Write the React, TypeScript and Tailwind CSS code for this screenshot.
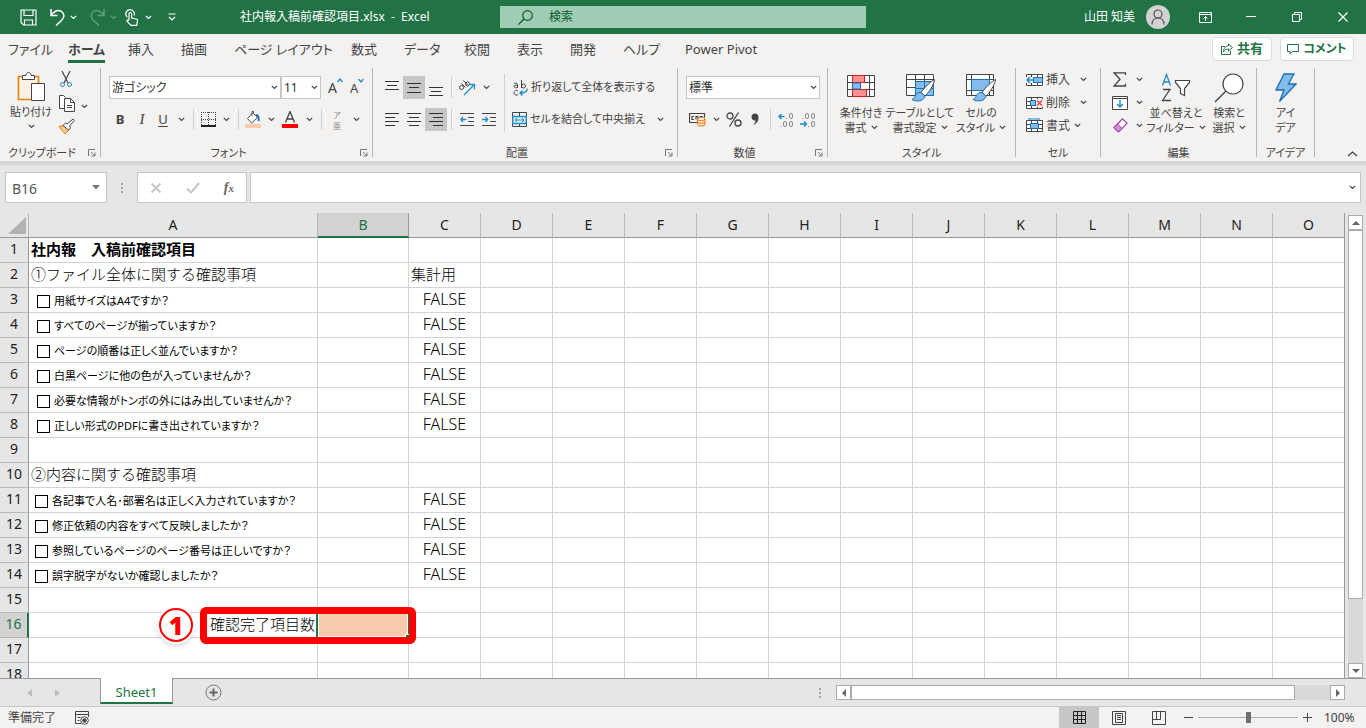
import React, { useState } from "react";

const ink = "#444444";
const blue = "#1e8bcd";

type Kids = { children?: React.ReactNode };

function Svg({ w = 16, h = 16, label, children }: Kids & { w?: number; h?: number; label?: string }) {
  return (
    <svg width={w} height={h} viewBox={`0 0 ${w} ${h}`} fill="none" stroke={ink} aria-label={label} className="shrink-0">
      {children}
    </svg>
  );
}

function Chevron({ color = ink }: { color?: string }) {
  return (
    <svg width="7" height="5" viewBox="0 0 7 5" fill="none" stroke={color} strokeWidth="1.2" className="shrink-0">
      <path d="M.8.8 3.5 3.5 6.2.8" />
    </svg>
  );
}

function Drop({ label }: { label: string }) {
  return (
    <button aria-label={label} className="flex h-[23px] w-4 shrink-0 items-center justify-center">
      <Chevron />
    </button>
  );
}

function Tool({ label, active, wide, children }: Kids & { label: string; active?: boolean; wide?: boolean }) {
  return (
    <button
      aria-label={label}
      className={`flex h-[23px] shrink-0 items-center justify-center ${wide ? "w-[22px]" : "w-5"} ${active ? "bg-[#c8c6c4]" : ""}`}
    >
      {children}
    </button>
  );
}

function Rule() {
  return <div className="mx-1 h-[21px] w-px shrink-0 bg-[#d0cecc]" />;
}

function Group({ name, width, launcher, children }: Kids & { name: string; width: string; launcher?: boolean }) {
  return (
    <>
      <section aria-label={name} className={`flex shrink-0 flex-col ${width}`}>
        <div className="flex h-[77px]">{children}</div>
        <div className="flex h-4 items-center">
          <span className="flex-1 text-center leading-4 whitespace-nowrap">{name}</span>
          {launcher && (
            <button aria-label={`${name}の設定`} className="flex w-4 justify-end pr-1">
              <Svg w={8} h={8}>
                <path d="M.5 7V.5H7M3 3l3.500 3.500M7 3.500V7H3.500" stroke="#777" />
              </Svg>
            </button>
          )}
        </div>
      </section>
      <div className="h-[89px] w-px shrink-0 bg-[#b8b6b4]" />
    </>
  );
}

function BigButton({ icon, lines, drop, width }: { icon: React.ReactNode; lines: [string, string]; drop?: boolean; width: string }) {
  return (
    <button className={`flex shrink-0 flex-col items-center pt-[5px] leading-[15px] whitespace-nowrap ${width}`}>
      <span className="mb-[2px] flex h-[30px] items-center">{icon}</span>
      <span>{lines[0]}</span>
      <span className="flex items-center gap-1">
        {lines[1]}
        {drop && <Chevron />}
      </span>
    </button>
  );
}

function Lines({ rows, w = 14 }: { rows: [number, number, number][]; w?: number }) {
  return (
    <Svg w={w} h={16}>
      {rows.map(([x1, x2, y]) => (
        <path key={y} d={`M${x1} ${y}.5H${x2}`} stroke="#333" />
      ))}
    </Svg>
  );
}

function Brush() {
  return (
    <>
      <path d="M31.500 6.500C28 8 21 15 18 19.500l4 3.500C26 19 31 12 31.500 6.500Z" fill="#fff" stroke="#444" />
      <path d="M18 19.500c-3-.5-5 1-6 4-.6 1.800-1.500 2.500-3 3 4 2.500 12 2 13-3.500Z" fill="#83bbec" stroke="#1a6fb5" />
    </>
  );
}

function TitleBar() {
  return (
    <header className="flex h-[34px] shrink-0 items-center bg-[#217346] text-white">
      <div className="flex w-[500px] shrink-0 items-center pl-5">
        <div className="flex w-[220px] items-center">
          <button aria-label="保存">
            <svg width="17" height="17" viewBox="0 0 17 17" fill="none" stroke="#fff" strokeWidth="1.200">
              <path d="M1 1h15v15H3.500L1 13.500ZM4 1v5.500h9V1M4.500 16v-5h8v5" />
            </svg>
          </button>
          <button aria-label="元に戻す" className="ml-3 flex items-center gap-1">
            <svg width="17" height="18" viewBox="0 0 17 18" fill="none" stroke="#fff" strokeWidth="1.500">
              <path d="M2 1v6.500h6.500M2 7.500C5 3.500 9 1.500 12.500 3.500c3.500 2.500 3 6 0 9L7 17.500" />
            </svg>
            <Chevron color="#fff" />
          </button>
          <button aria-label="やり直し" className="ml-3 flex items-center gap-1 opacity-30">
            <svg width="17" height="18" viewBox="0 0 17 18" fill="none" stroke="#fff" strokeWidth="1.500">
              <path d="M15 1v6.500H8.500M15 7.500C12 3.500 8 1.500 4.500 3.500 1 6 1.500 9.500 4.500 12.500l5.500 5" />
            </svg>
            <Chevron color="#fff" />
          </button>
          <button aria-label="タッチ/マウス モードの切り替え" className="ml-2 flex items-center gap-[6px]">
            <svg width="14" height="17" viewBox="0 0 14 17" fill="none" stroke="#fff" strokeWidth="1.200">
              <path d="M2.200 8A4.200 4.200 0 1 1 9 6.500M4 11V4.800a1.300 1.300 0 0 1 2.600 0V9l4.500 1c1 .2 1.600 1 1.400 2l-.8 4.300H6L2 12.200c-.4-1 .8-1.800 2-.7" />
            </svg>
            <Chevron color="#fff" />
          </button>
          <button aria-label="クイック アクセス ツール バーのユーザー設定" className="ml-4">
            <svg width="8" height="8" viewBox="0 0 8 8" fill="none" stroke="#fff" strokeWidth="1.200">
              <path d="M.5 1h7M1 4l3 3 3-3" />
            </svg>
          </button>
        </div>
        <h1 className="whitespace-pre">社内報入稿前確認項目.xlsx  -  Excel</h1>
      </div>
      <label className="flex h-[22px] w-[366px] items-center bg-[#9fcdb3] pl-[18px] text-[#0e5c2f]">
        <svg width="15" height="15" viewBox="0 0 15 15" fill="none" stroke="#0e5c2f" strokeWidth="1.200">
          <circle cx="9.500" cy="5.500" r="4.800" />
          <path d="M6 9 .5 14.500" />
        </svg>
        <input aria-label="検索" placeholder="検索" className="ml-4 w-40 bg-transparent outline-none placeholder:text-[#0e5c2f]" />
      </label>
      <div className="ml-auto flex items-center">
        <button className="flex items-center gap-[11px] pr-3">
          山田 知美
          <svg width="24" height="24" viewBox="0 0 24 24" fill="none" stroke="#505050" strokeWidth="1.200">
            <circle cx="12" cy="12" r="12" fill="#d2d2d2" stroke="none" />
            <circle cx="12" cy="9" r="4" />
            <path d="M6 19.500c0-4 2.500-6.500 6-6.500s6 2.500 6 6.500" />
          </svg>
        </button>
        <button aria-label="リボンの表示オプション" className="flex h-8 w-[46px] items-center justify-center">
          <svg width="13" height="11" viewBox="0 0 13 11" fill="none" stroke="#fff">
            <path d="M.5.500h12v10H.5ZM.5 2.500h12M6.500 9V4.500M4.500 6.500l2-2 2 2" />
          </svg>
        </button>
        <button aria-label="最小化" className="flex h-8 w-[46px] items-center justify-center">
          <svg width="10" height="2" viewBox="0 0 10 2" stroke="#fff"><path d="M0 .5h10" /></svg>
        </button>
        <button aria-label="元に戻す（縮小）" className="flex h-8 w-[46px] items-center justify-center">
          <svg width="10" height="10" viewBox="0 0 10 10" fill="none" stroke="#fff"><path d="M.5 2.500h7v7h-7ZM2.500 2.500v-2h7v7h-2" /></svg>
        </button>
        <button aria-label="閉じる" className="flex h-8 w-[46px] items-center justify-center">
          <svg width="10" height="10" viewBox="0 0 10 10" stroke="#fff" strokeWidth="1.200"><path d="m.5.500 9 9M9.500.500l-9 9" /></svg>
        </button>
      </div>
    </header>
  );
}

const tabs: [string, string][] = [
  ["ファイル", "w-[60px]"],
  ["ホーム", "w-[60px]"],
  ["挿入", "w-[53px]"],
  ["描画", "w-[53px]"],
  ["ページ レイアウト", "w-[117px]"],
  ["数式", "w-[53px]"],
  ["データ", "w-[60px]"],
  ["校閲", "w-[53px]"],
  ["表示", "w-[53px]"],
  ["開発", "w-[53px]"],
  ["ヘルプ", "w-[62px]"],
  ["Power Pivot", "w-24"],
];

function TabRow() {
  return (
    <nav className="mb-1 flex h-[30px] shrink-0 items-center pr-3 pl-2 text-[13px]">
      <div className="flex flex-1">
        {tabs.map(([t, width]) => (
          <button key={t} className={`text-left whitespace-nowrap ${width}`}>
            <span className={`block h-[27px] w-max border-b-[3px] leading-[26px] ${t === "ホーム" ? "border-[#217346] font-bold" : "border-transparent"}`}>
              {t}
            </span>
          </button>
        ))}
      </div>
      <div className="flex gap-2 font-bold text-[#217346]">
        <button className="flex h-6 w-[60px] items-center justify-center gap-1 rounded-sm border border-[#dcdad8] bg-white">
          <svg width="12" height="12" viewBox="0 0 12 12" fill="none" stroke="#217346">
            <path d="M4 3.500H.5v8h9V8M7.500 1l4 3.500-4 3.500V6C5 6 3.500 7 2.500 9 2.500 5.500 4.500 3 7.500 3Z" />
          </svg>
          共有
        </button>
        <button className="flex h-6 w-[74px] items-center justify-center gap-1 rounded-sm border border-[#dcdad8] bg-white text-xs whitespace-nowrap">
          <svg width="12" height="11" viewBox="0 0 12 11" fill="none" stroke="#217346">
            <path d="M.5.500h11v7h-6l-2.500 2.500V7.500H.5Z" />
          </svg>
          コメント
        </button>
      </div>
    </nav>
  );
}

function Picker({ label, value, width }: { label: string; value: string; width: string }) {
  return (
    <div className={`relative flex h-[23px] items-center border border-[#c8c6c4] bg-white ${width}`}>
      <select aria-label={label} className="w-full appearance-none bg-transparent pl-[2px] text-xs text-[#333] outline-none">
        <option>{value}</option>
      </select>
      <span className="pointer-events-none absolute right-[2px]">
        <Chevron />
      </span>
    </div>
  );
}

function Grid({ children }: Kids) {
  return (
    <Svg w={34} h={30}>
      <path d="M3.500 1.500h27v21h-27ZM3.500 6.500h27M3.500 14.500h27M12.500 1.500v21M21.500 1.500v21" fill="#fff" />
      {children}
    </Svg>
  );
}

function Ribbon() {
  return (
    <div className="flex h-[93px] shrink-0 items-start text-[11px]">
      <Group name="クリップボード" width="w-[100px]" launcher>
        <button className="ml-2 flex w-[46px] flex-col items-center pt-[3px] leading-4 whitespace-nowrap">
          <Svg w={28} h={31}>
            <path d="M1.500 5.500h20v23h-20Z" stroke="#e8820c" strokeWidth="1.600" fill="#fbf3e6" />
            <path d="M5.500 8.500V4.500H9c0-4 5-4 5 0h3.500v4Z" fill="#fff" />
            <path d="M14.500 12.500h13v17h-13Z" fill="#fff" />
          </Svg>
          <span className="mt-[2px]">貼り付け</span>
          <span className="flex h-3 items-center"><Chevron /></span>
        </button>
        <div className="flex flex-col pt-[3px]">
          <button aria-label="切り取り" className="flex h-6 w-6 items-start justify-center">
            <Svg w={12} h={17}>
              <path d="M2 0l6 12M10 0 4 12" strokeWidth="1.200" />
              <circle cx="2.500" cy="13.500" r="2" stroke={blue} />
              <circle cx="9.500" cy="13.500" r="2" stroke={blue} />
            </Svg>
          </button>
          <div className="flex h-6">
            <button aria-label="コピー" className="flex w-[22px] items-start justify-end">
              <Svg w={17} h={17}>
                <path d="M5.500 13.500h-5V.500h4l2 2M5.500 3.500h6l4 4v9h-10Z" fill="#fff" />
                <path d="M11.500 3.500v4h4M8 10.500h5M8 12.500h5" />
              </Svg>
            </button>
            <Drop label="コピーのオプション" />
          </div>
          <button aria-label="書式のコピー/貼り付け" className="flex w-6 justify-center">
            <Svg w={17} h={15}>
              <path d="M1 7.500 7 6l5 4-5 5Z" fill="#f8c98b" stroke="#e8820c" />
              <path d="m5 6.500 2.500-2.500L9 5l6-5 1.500 1.500-5 5.500 1 2-2 2Z" fill="#fff" />
            </Svg>
          </button>
        </div>
      </Group>

      <Group name="フォント" width="w-[271px]" launcher>
        <div className="flex flex-col gap-[9px] pt-2 pl-2">
          <div className="flex items-center">
            <Picker label="フォント" value="游ゴシック" width="w-[172px]" />
            <Picker label="フォント サイズ" value="11" width="w-10" />
            <button aria-label="フォント サイズの拡大" className="ml-[7px] flex w-[22px] text-sm leading-5">
              A<Svg w={6} h={5}><path d="M.5 4 3 1l2.500 3" stroke={blue} strokeWidth="1.300" /></Svg>
            </button>
            <button aria-label="フォント サイズの縮小" className="flex w-[22px] text-[13px] leading-5">
              A<Svg w={6} h={5}><path d="M.5 1 3 4l2.500-3" stroke={blue} strokeWidth="1.300" /></Svg>
            </button>
          </div>
          <div className="flex items-center">
            <Tool label="太字" wide><b className="text-[13px]">B</b></Tool>
            <Tool label="斜体" wide><i className="font-['Liberation_Serif',serif] text-[15px]">I</i></Tool>
            <Tool label="下線"><u className="text-[13px] underline-offset-2">U</u></Tool>
            <Drop label="下線のオプション" />
            <Rule />
            <Tool label="罫線">
              <Svg w={15} h={15}>
                <path d="M.5 0v14M7.500 0v14M14.500 0v14M0 .5h15M0 7.500h15" strokeDasharray="1 1" />
                <path d="M0 14h15" stroke="#222" strokeWidth="2" />
              </Svg>
            </Tool>
            <Drop label="罫線のオプション" />
            <Rule />
            <Tool label="塗りつぶしの色">
              <Svg w={16} h={17}>
                <path d="m7.500 2-5 5.500L6.500 12l6-5.500-4-4V.500H7v4" fill="#fff" />
                <path d="M11 4c3 .5 3 3 2.500 6" stroke="#1a6fb5" strokeWidth="2" />
                <path d="M0 15h16" stroke="#f8cbad" strokeWidth="4" />
              </Svg>
            </Tool>
            <Drop label="塗りつぶしの色のオプション" />
            <Tool label="フォントの色" wide>
              <Svg w={16} h={17}>
                <path d="M3.500 11.500 8 .5l4.500 11M5 8h6" strokeWidth="1.300" />
                <path d="M0 15h16" stroke="#f00" strokeWidth="4" />
              </Svg>
            </Tool>
            <Drop label="フォントの色のオプション" />
            <Rule />
            <Tool label="ふりがなの表示/非表示" wide>
              <span className="flex flex-col text-[8px] leading-[11px] text-[#8a8886]"><span>ア</span><span>亜</span></span>
            </Tool>
            <Drop label="ふりがなのオプション" />
          </div>
        </div>
      </Group>

      <Group name="配置" width="w-[304px]" launcher>
        <div className="flex flex-col gap-[9px] pt-2 pl-2">
          <div className="flex items-center">
            <Tool label="上揃え" wide><Lines rows={[[0, 14, 1], [2, 12, 5], [0, 14, 9]]} /></Tool>
            <Tool label="上下中央揃え" wide active><Lines rows={[[0, 14, 3], [2, 12, 7], [0, 14, 12]]} /></Tool>
            <Tool label="下揃え" wide><Lines rows={[[0, 14, 7], [2, 12, 11], [0, 14, 15]]} /></Tool>
            <Rule />
            <Tool label="方向" wide>
              <Svg w={18} h={16}>
                <circle cx="3.500" cy="7.500" r="2" />
                <path d="m3.500 3.500 4 4M5.500.500l4 4.500" />
                <circle cx="9.500" cy="4" r="2" />
                <path d="m6 15 9.500-9.500M11.500 4.500H16.500V9.500" stroke={blue} strokeWidth="1.300" />
              </Svg>
            </Tool>
            <Drop label="方向のオプション" />
          </div>
          <div className="flex items-center">
            <Tool label="左揃え" wide><Lines rows={[[0, 14, 1], [0, 10, 5], [0, 14, 9], [0, 10, 13]]} /></Tool>
            <Tool label="中央揃え" wide><Lines rows={[[0, 14, 1], [2, 12, 5], [0, 14, 9], [2, 12, 13]]} /></Tool>
            <Tool label="右揃え" wide active><Lines rows={[[0, 14, 1], [4, 14, 5], [0, 14, 9], [4, 14, 13]]} /></Tool>
            <Rule />
            <Tool label="インデントを減らす" wide>
              <Svg w={14} h={14}>
                <path d="M0 .5h14M8 4.500h6M8 8.500h6M0 12.500h14" />
                <path d="M6.500 6.500H1M3 4 .8 6.500 3 9" stroke={blue} strokeWidth="1.300" />
              </Svg>
            </Tool>
            <Tool label="インデントを増やす" wide>
              <Svg w={14} h={14}>
                <path d="M0 .5h14M8 4.500h6M8 8.500h6M0 12.500h14" />
                <path d="M0 6.500h5.500M3.500 4l2.200 2.500L3.500 9" stroke={blue} strokeWidth="1.300" />
              </Svg>
            </Tool>
          </div>
        </div>
        <div className="mx-1 mt-[6px] h-[58px] w-px bg-[#d0cecc]" />
        <div className="flex flex-col gap-[9px] pt-2 pl-[3px] whitespace-nowrap">
          <button className="flex h-[23px] items-center gap-[3px]">
            <Svg w={16} h={16}>
              <path d="M2 3.500c2-1 3.500 0 3.500 1V8M5.500 5C3 5 2 5.500 2 6.500S4.500 8.500 5.500 7M9.500 0v8M6 11c-2-1.500-4 0-4 1.800s2 3.200 4 1.700" />
              <circle cx="11.500" cy="6" r="2" />
              <path d="M15 8.500c.5 3-2 4.500-6.500 4.500M10.500 10.500 8 13l2.500 2.500" stroke={blue} strokeWidth="1.400" />
            </Svg>
            折り返して全体を表示する
          </button>
          <div className="flex">
            <button className="flex h-[23px] w-[140px] items-center gap-[3px]">
              <Svg w={15} h={16}>
                <path d="M.5.500h14v14H.5ZM7.500 0v4M7.500 12v3" />
                <path d="M.8 4.500h13.400v7H.8Z" stroke={blue} fill="#e4f1fb" strokeWidth="1.400" />
                <path d="M3 8h9M5 6 3 8l2 2M10 6l2 2-2 2" stroke={blue} />
              </Svg>
              セルを結合して中央揃え
            </button>
            <Drop label="結合のオプション" />
          </div>
        </div>
      </Group>

      <Group name="数値" width="w-[149px]" launcher>
        <div className="flex flex-col gap-[9px] pt-2 pl-2">
          <Picker label="表示形式" value="標準" width="w-[134px]" />
          <div className="flex items-center">
            <Tool label="通貨表示形式" wide>
              <Svg w={17} h={15}>
                <path d="M8 10.500H.5v-9h15v4M5 4.500H3v3h2M9 7.500v-3H7v3M11 4.500h2v1" strokeWidth="1.200" />
                <path d="M8.500 7v5.500c0 2 7.500 2 7.500 0V7" fill="#fbe3c8" stroke="#e8720c" />
                <path d="M8.500 10c0 1.500 7.500 1.500 7.500 0" stroke="#e8720c" />
                <ellipse cx="12.200" cy="7" rx="3.700" ry="1.500" fill="#fff" stroke="#e8720c" />
              </Svg>
            </Tool>
            <Drop label="通貨のオプション" />
            <Tool label="パーセント スタイル">
              <Svg w={16} h={15}>
                <circle cx="4" cy="4" r="3" strokeWidth="1.300" />
                <circle cx="12" cy="11" r="3" strokeWidth="1.300" />
                <path d="M12.500.500l-9 14" strokeWidth="1.300" />
              </Svg>
            </Tool>
            <Tool label="桁区切りスタイル" wide>
              <Svg w={8} h={13}>
                <path d="M4 .5c2.500 0 3.500 1.800 3.500 4 0 3.500-2 6.500-5.500 7.500 1.500-1.300 2.500-3 2.500-4.500C2 7.800.500 6 .500 4S2 .5 4 .5Z" fill={ink} stroke="none" />
              </Svg>
            </Tool>
            <Rule />
            <Tool label="小数点以下の表示桁数を増やす" wide>
              <Svg w={16} h={16}>
                <path d="M6.500 4.500H1M3.500 2 1 4.500 3.500 7" stroke={blue} strokeWidth="1.400" />
                <path d="M8 6.500h1M2.500 14.500h1" stroke="#8a8886" />
                <rect x="11.500" y="1.500" width="3" height="5" rx="1.500" stroke="#8a8886" />
                <rect x="5.500" y="9.500" width="3" height="5" rx="1.500" stroke="#8a8886" />
                <rect x="11.500" y="9.500" width="3" height="5" rx="1.500" stroke="#8a8886" />
              </Svg>
            </Tool>
            <Tool label="小数点以下の表示桁数を減らす" wide>
              <Svg w={16} h={16}>
                <path d="M0 12h6.500M4 9.500 6.500 12 4 14.500" stroke={blue} strokeWidth="1.400" />
                <path d="M2.500 6.500h1M8 14.500h1" stroke="#8a8886" />
                <rect x="5.500" y="1.500" width="3" height="5" rx="1.500" stroke="#8a8886" />
                <rect x="11.500" y="1.500" width="3" height="5" rx="1.500" stroke="#8a8886" />
                <rect x="11.500" y="9.500" width="3" height="5" rx="1.500" stroke="#8a8886" />
              </Svg>
            </Tool>
          </div>
        </div>
      </Group>

      <Group name="スタイル" width="w-[187px]">
        <div className="flex pl-1">
          <BigButton
            width="w-[58px]"
            drop
            lines={["条件付き", "書式"]}
            icon={
              <Svg w={28} h={30}>
                <path d="M.5 2.500h27v21H.5ZM.5 9.500h27M.5 16.500h27M5.500 2.500v21M22.500 2.500v21" fill="#fff" />
                <path d="M5.500 2.500h12v7h-12Z" fill="#ff9090" stroke="#e01b1b" />
                <path d="M5.500 16.500h14v7h-14Z" fill="#ff9090" stroke="#e01b1b" />
                <path d="M5.500 10h8v6h-8Z" fill="#83bbec" stroke="#1a6fb5" />
              </Svg>
            }
          />
          <BigButton
            width="w-[60px]"
            drop
            lines={["テーブルとして", "書式設定"]}
            icon={
              <Grid>
                <path d="M12.500 8.500h18v14h-18Z" fill="#83bbec" stroke="#1a6fb5" />
                <path d="M21.500 8v14M12 15.500h18" stroke="#1a6fb5" />
                <Brush />
              </Grid>
            }
          />
          <BigButton
            width="w-[62px]"
            drop
            lines={["セルの", "スタイル"]}
            icon={
              <Svg w={34} h={30}>
                <path d="M2.500 1.500h27v21h-27ZM2.500 6.500h27M2.500 17.500h27M7.500 1.500v21M25.500 1.500v21" fill="#fff" />
                <path d="M7.500 6.500h18v11h-18Z" fill="#83bbec" stroke="#1a6fb5" />
                <Brush />
              </Svg>
            }
          />
        </div>
      </Group>

      <Group name="セル" width="w-[84px]">
        <div className="flex flex-col pl-[10px] text-xs">
          {["挿入", "削除", "書式"].map((name, i) => (
            <button key={name} className="flex h-[23px] w-[64px] items-center gap-[3px] whitespace-nowrap">
              <Svg w={17} h={16}>
                <path d="M.5 2.500h16v11H.5ZM.5 6.500h16M.5 10.500h16M5.500 2.500v11M11.500 2.500v11" fill="#fff" />
                {i === 0 && (
                  <>
                    <path d="M7.500 5.500h9v5h-9Z" fill="#83bbec" stroke="#1a6fb5" />
                    <path d="M0 5h7v6H0Z" fill="#f3f2f1" stroke="none" />
                    <path d="M8 8H1M4 5 1 8l3 3" stroke={blue} strokeWidth="1.500" />
                  </>
                )}
                {i === 1 && (
                  <>
                    <path d="M10 4h7v8h-7Z" fill="#f3f2f1" stroke="none" />
                    <path d="M4.500 5.500h5v5h-5Z" fill="#83bbec" stroke="#1a6fb5" />
                    <path d="m11 5.500 5 5M16 5.500l-5 5" stroke="#e8413b" strokeWidth="1.500" />
                  </>
                )}
                {i === 2 && (
                  <>
                    <path d="M4.500 5.500h8v5h-8Z" fill="#83bbec" stroke="#1a6fb5" />
                    <path d="M3 1h10M3 0v2.500M13 0v2.500" stroke={blue} />
                  </>
                )}
              </Svg>
              <span>{name}</span>
              <span className={i < 2 ? "ml-[7px]" : "ml-px"}><Chevron /></span>
            </button>
          ))}
        </div>
      </Group>

      <Group name="編集" width="w-[155px]">
        <div className="flex flex-col pl-2">
          <div className="flex">
            <Tool label="オート SUM" wide><Svg w={14} h={15}><path d="M12.500 3V.800H1L7 7.300 1 14h11.500v-2.300" strokeWidth="1.300" /></Svg></Tool>
            <Drop label="オート SUM のオプション" />
          </div>
          <div className="flex">
            <Tool label="フィル" wide>
              <Svg w={16} h={14}>
                <path d="M.5.500h15v13H.5ZM.5 2.500h15" fill="#fff" />
                <path d="M8 4v7M5 8l3 3 3-3" stroke={blue} strokeWidth="1.400" />
              </Svg>
            </Tool>
            <Drop label="フィルのオプション" />
          </div>
          <div className="flex">
            <Tool label="クリア" wide>
              <Svg w={15} h={15}>
                <path d="M9.500.800 14 5.300 5.500 14 1 9.500Z" fill="#fff" stroke="#9b3fa5" strokeWidth="1.200" />
                <path d="M4.500 6 9 10.500 5.500 14 1 9.500Z" fill="#d58fdc" stroke="#9b3fa5" />
              </Svg>
            </Tool>
            <Drop label="クリアのオプション" />
          </div>
        </div>
        <BigButton
          width="w-[58px]"
          drop
          lines={["並べ替えと", "フィルター"]}
          icon={
            <Svg w={30} h={30}>
              <path d="M1.500 12.500 5.500 1.500l4 11M3 9h5" stroke={blue} strokeWidth="1.300" />
              <path d="M2 16.500h7L1.500 27.500H10" strokeWidth="1.300" />
              <path d="M14.500 7.500h14v2l-5 6v7l-4-2v-5l-5-6Z" fill="#fff" strokeWidth="1.200" />
            </Svg>
          }
        />
        <BigButton
          width="w-[48px]"
          drop
          lines={["検索と", "選択"]}
          icon={
            <Svg w={30} h={30}>
              <circle cx="19" cy="11" r="10" fill="#fff" strokeWidth="1.200" />
              <path d="M12 18 1 29" strokeWidth="1.400" />
            </Svg>
          }
        />
      </Group>

      <Group name="アイデア" width="w-[57px]">
        <BigButton
          width="w-[57px]"
          lines={["アイ", "デア"]}
          icon={
            <Svg w={22} h={30}>
              <path d="M9 1h10l-5.500 10H21L4.500 28.500 9 17H1Z" fill="#83bbec" stroke="#1a6fb5" strokeWidth="1.300" />
            </Svg>
          }
        />
      </Group>
      <button aria-label="リボンを折りたたむ" className="mr-2 ml-auto self-end pb-1">
        <Svg w={11} h={6}><path d="m1 5 4.500-4L10 5" strokeWidth="1.300" /></Svg>
      </button>
    </div>
  );
}

function Dots() {
  return (
    <svg width="2" height="10" viewBox="0 0 2 10" fill="#a6a6a6"><path d="M0 0h2v2H0ZM0 4h2v2H0ZM0 8h2v2H0Z" /></svg>
  );
}

function FormulaBar() {
  return (
    <div className="flex h-[52px] shrink-0 items-center border-t-4 border-[#d6d6d6] px-[5px] pb-[3px]">
      <div className="flex h-[31px] w-[102px] items-center border border-[#c6c6c6] bg-white">
        <input aria-label="名前ボックス" defaultValue="B16" className="w-20 bg-transparent pt-[3px] pl-[6px] text-sm text-[#555] outline-none" />
        <button aria-label="名前の一覧" className="ml-[6px]">
          <svg width="8" height="5" viewBox="0 0 8 5" fill="#777"><path d="M0 0h8L4 4.500Z" /></svg>
        </button>
      </div>
      <div className="flex w-[30px] justify-center"><Dots /></div>
      <div className="flex h-[31px] w-[110px] items-center justify-around border border-[#c6c6c6] bg-white">
        <button aria-label="キャンセル"><Svg w={12} h={12}><path d="m1.500 1.500 9 9M10.500 1.500l-9 9" stroke="#c6c6c6" strokeWidth="1.800" /></Svg></button>
        <button aria-label="入力"><Svg w={14} h={12}><path d="m1 6.500 4 4L13 1" stroke="#c6c6c6" strokeWidth="2" /></Svg></button>
        <button aria-label="関数の挿入" className="font-['Liberation_Serif',serif] text-sm font-bold text-[#666] italic">
          f<span className="text-[11px]">x</span>
        </button>
      </div>
      <div className="ml-[3px] flex h-[31px] flex-1 items-center border border-[#c6c6c6] bg-white pr-1">
        <input aria-label="数式バー" className="flex-1 bg-transparent px-2 text-sm outline-none" />
        <button aria-label="数式バーの展開"><Chevron /></button>
      </div>
    </div>
  );
}

const columns = ["A", "B", "C", "D", "E", "F", "G", "H", "I", "J", "K", "L", "M", "N", "O"];

const checks: Record<number, string> = {
  3: "用紙サイズはA4ですか？",
  4: "すべてのページが揃っていますか？",
  5: "ページの順番は正しく並んでいますか？",
  6: "白黒ページに他の色が入っていませんか？",
  7: "必要な情報がトンボの外にはみ出していませんか？",
  8: "正しい形式のPDFに書き出されていますか？",
  11: "各記事で人名･部署名は正しく入力されていますか？",
  12: "修正依頼の内容をすべて反映しましたか？",
  13: "参照しているページのページ番号は正しいですか？",
  14: "誤字脱字がないか確認しましたか？",
};

const headings: Record<number, React.ReactNode> = {
  1: <span className="font-bold">社内報　入稿前確認項目</span>,
  2: "①ファイル全体に関する確認事項",
  10: "②内容に関する確認事項",
};

function CountLabel() {
  return (
    <div className="relative h-6 pr-[2px] text-right">
      確認完了項目数
      <div className="pointer-events-none absolute -top-[6px] left-[171px] z-10 h-[37px] w-[216px] rounded-md border-[7px] border-[#ff0000]" />
      <div className="absolute -top-[7px] left-[128px] flex size-[38px] items-center justify-center rounded-full bg-white shadow-md">
        <div className="flex size-[34px] shrink-0 items-center justify-center rounded-full border-2 border-[#f00] text-[25px] leading-none font-black text-[#f00]">
          1
        </div>
      </div>
    </div>
  );
}

function Sheet() {
  const [done, setDone] = useState<Record<number, boolean>>({});
  const line = "border-r border-b border-[#d4d4d4]";
  return (
    <div className="min-w-0 flex-1 overflow-hidden border-r border-[#999] bg-white">
      <table className="w-full table-fixed border-separate border-spacing-0 text-[15px] leading-[22px] font-light whitespace-nowrap text-black [font-feature-settings:normal]">
        <colgroup>
          <col className="w-[29px]" />
          <col className="w-[289px]" />
          <col className="w-[91px]" />
          {columns.slice(2, -1).map((c) => <col key={c} className="w-[72px]" />)}
          <col />
        </colgroup>
        <thead className="text-sm text-[#222]">
          <tr>
            <th className="h-[25px] border-r border-b border-r-[#b8b8b8] border-b-[#999] bg-[#e6e6e6] p-0">
              <svg width="18" height="17" viewBox="0 0 18 17" fill="#b2b2b2" className="ml-2"><path d="M18 0v17H0Z" /></svg>
            </th>
            {columns.map((c) => (
              <th
                key={c}
                scope="col"
                className={`h-[25px] border-r p-0 font-normal last:border-r-0 ${c === "B" ? "border-b-2 border-r-[#999] border-b-[#217346] bg-[#d2d2d2] text-[#217346]" : "border-b border-r-[#b8b8b8] border-b-[#999] bg-[#e6e6e6]"}`}
              >
                {c}
              </th>
            ))}
          </tr>
        </thead>
        <tbody>
          {Array.from({ length: 18 }, (_, i) => i + 1).map((r) => (
            <tr key={r} className="align-top">
              <th
                scope="row"
                className={`h-[25px] border-b p-0 text-sm leading-[22px] font-normal ${r === 16 ? "border-r-2 border-r-[#217346] border-b-[#b8b8b8] bg-[#d2d2d2] text-[#217346]" : "border-r border-r-[#999] border-b-[#b8b8b8] bg-[#e6e6e6] text-[#222]"}`}
              >
                {r}
              </th>
              <td className={`h-[25px] p-0 ${line}`}>
                {checks[r] ? (
                  <label className={`flex h-6 items-center gap-1 pt-[2px] text-[11px] font-normal [font-feature-settings:'palt'] ${r < 10 ? "pl-2" : "pl-[6px]"}`}>
                    <input
                      type="checkbox"
                      checked={!!done[r]}
                      onChange={(e) => setDone({ ...done, [r]: e.target.checked })}
                      className="size-[13px] appearance-none border border-black bg-white checked:bg-black"
                    />
                    {checks[r]}
                  </label>
                ) : r === 16 ? (
                  <CountLabel />
                ) : (
                  <div className="pl-[2px]">{headings[r]}</div>
                )}
              </td>
              <td className={`relative h-[25px] p-0 ${line}`}>
                {r === 16 && (
                  <div className="absolute -inset-[2px] border-2 border-[#217346] bg-white p-px">
                    <div className="h-full bg-[#f8cbad]" />
                    <div className="absolute -right-[3px] -bottom-[3px] size-[6px] border-t border-l border-white bg-[#217346]" />
                  </div>
                )}
              </td>
              <td className={`h-[25px] p-0 ${line}`}>
                {r === 2 ? <div className="pl-[2px]">集計用</div> : checks[r] ? <div className="text-center text-base leading-[23px]">{done[r] ? "TRUE" : "FALSE"}</div> : null}
              </td>
              {columns.slice(3).map((c) => <td key={c} className={`h-[25px] p-0 last:border-r-0 ${line}`} />)}
            </tr>
          ))}
        </tbody>
      </table>
    </div>
  );
}

function Arrow({ dir }: { dir: "up" | "down" | "left" | "right" }) {
  const d = { up: "M0 6h8L4 2Z", down: "M0 2h8L4 6Z", left: "M6 0v8L2 4Z", right: "M2 0v8l4-4Z" }[dir];
  const name = { up: "上へ", down: "下へ", left: "左へ", right: "右へ" }[dir];
  return (
    <button aria-label={name} className="flex size-[15px] shrink-0 items-center justify-center border border-[#ababab] bg-white">
      <svg width="8" height="8" viewBox="0 0 8 8" fill="#666"><path d={d} /></svg>
    </button>
  );
}

function SheetTabs() {
  return (
    <div className="flex h-7 shrink-0 items-center border-t border-[#999]">
      <div className="flex w-[100px] items-center gap-[23px] pl-[27px]">
        <svg width="5" height="8" viewBox="0 0 5 8" fill="#bdbdbd"><path d="M5 0v8L0 4Z" /></svg>
        <svg width="5" height="8" viewBox="0 0 5 8" fill="#bdbdbd"><path d="M0 0v8l5-4Z" /></svg>
      </div>
      <button className="-mt-px h-[26px] w-[73px] self-start border-x border-b-2 border-x-[#999] border-b-[#217346] bg-white pt-1 text-[13px] leading-5 text-[#217346]">
        Sheet1
      </button>
      <button aria-label="新しいシート" className="ml-8">
        <Svg w={17} h={17}>
          <circle cx="8.500" cy="8.500" r="7.500" stroke="#777" />
          <path d="M8.500 4.500v8M4.500 8.500h8" stroke="#666" strokeWidth="2" />
        </Svg>
      </button>
      <div className="ml-auto flex items-center pr-[21px]">
        <Dots />
        <div className="ml-[15px] flex w-[509px] bg-[#d9d9d9]">
          <Arrow dir="left" />
          <div className="h-[15px] w-[444px] border border-[#ababab] bg-white" />
          <div className="flex-1" />
          <Arrow dir="right" />
        </div>
      </div>
    </div>
  );
}

function StatusBar() {
  return (
    <footer className="flex h-[22px] shrink-0 items-center border-t border-[#c6c6c6] bg-[#f3f2f1] pl-2">
      <span>準備完了</span>
      <button aria-label="マクロの記録" className="ml-[19px]">
        <Svg w={14} h={14}>
          <path d="M6 12.500H.5V.500h13V6M.5 3.500h13M2.500 6.500h3M2.500 9.500h2" />
          <circle cx="9.500" cy="9.500" r="3.800" fill="#fff" />
          <circle cx="9.500" cy="9.500" r="1.800" fill={ink} />
        </Svg>
      </button>
      <div className="ml-auto flex h-full items-center">
        <button aria-label="標準" className="flex h-full w-10 items-center justify-center bg-[#c8c6c4]">
          <Svg w={13} h={13}><path d="M.5.500h12v12H.5ZM.5 4.500h12M.5 8.500h12M4.500.500v12M8.500.500v12" stroke="#222" /></Svg>
        </button>
        <button aria-label="ページ レイアウト" className="flex h-full w-10 items-center justify-center">
          <Svg w={14} h={14}><path d="M.5.500h13v13H.5ZM3.500 2.500h7v9h-7ZM5 4.500h4M5 6.500h4M5 8.500h4" /></Svg>
        </button>
        <button aria-label="改ページ プレビュー" className="flex h-full w-10 items-center justify-center">
          <Svg w={14} h={14}><path d="M.5.500h13v13H.5ZM.5 8.500h8v-8M4.500.500v8" /></Svg>
        </button>
        <button aria-label="縮小" className="ml-[5px]"><Svg w={9} h={9}><path d="M0 4.500h9" /></Svg></button>
        <input
          type="range"
          aria-label="ズーム"
          min={0}
          max={100}
          defaultValue={50}
          className="mx-[5px] h-[11px] w-[100px] appearance-none bg-[linear-gradient(#b0aeac,#b0aeac)] bg-[length:100%_1px] bg-center bg-no-repeat [&::-webkit-slider-thumb]:h-[11px] [&::-webkit-slider-thumb]:w-[5px] [&::-webkit-slider-thumb]:appearance-none [&::-webkit-slider-thumb]:bg-[#6f6f6f]"
        />
        <button aria-label="拡大"><Svg w={9} h={9}><path d="M0 4.500h9M4.500 0v9" /></Svg></button>
        <span className="w-[54px] pl-3">100%</span>
      </div>
    </footer>
  );
}

export default function App() {
  return (
    <div className="flex h-screen flex-col overflow-hidden bg-[#e6e6e6] font-['Noto_Sans','Noto_Sans_CJK_JP',sans-serif] text-xs text-[#444] [font-feature-settings:'palt']">
      <TitleBar />
      <div className="shrink-0 bg-[#f3f2f1]">
        <TabRow />
        <Ribbon />
      </div>
      <FormulaBar />
      <main className="flex min-h-0 flex-1">
        <Sheet />
        <div className="mt-[2px] mr-[3px] ml-[3px] flex w-[15px] flex-col bg-[#d9d9d9]">
          <Arrow dir="up" />
          <div className="h-[369px] border border-[#ababab] bg-white" />
          <div className="flex-1" />
          <Arrow dir="down" />
        </div>
      </main>
      <SheetTabs />
      <StatusBar />
    </div>
  );
}
